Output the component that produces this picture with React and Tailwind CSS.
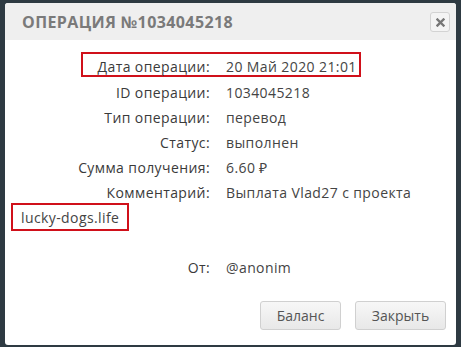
import React from "react";

const rows = [
  { label: "Дата операции:", value: "20 Май 2020 21:01", mark: true },
  { label: "ID операции:", value: "1034045218" },
  { label: "Тип операции:", value: "перевод" },
  { label: "Статус:", value: "выполнен" },
  { label: "Сумма получения:", value: "6.60 ₽" },
  { label: "Комментарий:", value: "Выплата Vlad27 с проекта" },
];

const App = () => {
  return (
    <div
      className="w-[461px] h-[347px] bg-[#2e3a42] pt-[3px] pl-[5px] overflow-hidden"
      style={{ fontFamily: '"Open Sans", "Liberation Sans", sans-serif' }}
    >
      <div className="w-[451px] h-[342px] bg-white rounded-[3px] overflow-hidden flex flex-col">
        {/* header */}
        <div className="h-[37px] bg-[#efefef] flex items-center justify-between pl-[17px] pr-[6px]">
          <span className="text-[16px] font-bold tracking-[0.4px] text-[#7a7a7a]">
            ОПЕРАЦИЯ №1034045218
          </span>
          <button className="w-[20px] h-[20px] mt-[1px] border border-[#d3d3d3] rounded-[3px] bg-[#f4f4f4] flex items-center justify-center">
            <svg width="9" height="9" viewBox="0 0 9 9">
              <path d="M1.5 1.5 L7.5 7.5 M7.5 1.5 L1.5 7.5" stroke="#777" strokeWidth="2.4" strokeLinecap="square" />
            </svg>
          </button>
        </div>

        {/* body */}
        <div className="pt-[12px] text-[14px] tracking-[0.4px] text-[#3a3a3a] whitespace-nowrap">
          {rows.map((r) =>
            r.mark ? (
              <div key={r.label} className="h-[25px] flex items-center">
                <div className="ml-[76px] h-[25px] pt-[3px] flex items-center border-2 border-[#d0101a] pr-[2px]">
                  <span className="w-[127px] text-right">{r.label}</span>
                  <span className="ml-[16px] text-[#444]">{r.value}</span>
                </div>
              </div>
            ) : (
              <div key={r.label} className="h-[25px] pt-[5px] flex items-center">
                <span className="w-[205px] text-right">{r.label}</span>
                <span className="ml-[16px] text-[#444]">{r.value}</span>
              </div>
            )
          )}
          <div className="h-[28px] mt-[1px] flex items-center">
            <span className="ml-[6px] h-[28px] px-[8px] flex items-center border-2 border-[#d0101a] text-[#444]">
              lucky-dogs.life
            </span>
          </div>
          <div className="h-[25px] mt-[24px] flex items-center">
            <span className="w-[205px] text-right">От:</span>
            <span className="ml-[16px] text-[#444]">@anonim</span>
          </div>
        </div>

        {/* footer */}
        <div className="mt-auto mb-[15px] flex justify-end gap-[14px] pr-[10px]">
          <button className="w-[81px] h-[29px] border border-[#d0d0d0] rounded-[3px] bg-gradient-to-b from-[#f7f7f7] to-[#e8e8e8] text-[14px] text-[#555]">
            Баланс
          </button>
          <button className="w-[91px] h-[29px] border border-[#d0d0d0] rounded-[3px] bg-gradient-to-b from-[#f7f7f7] to-[#e8e8e8] text-[14px] text-[#555]">
            Закрыть
          </button>
        </div>
      </div>
    </div>
  );
};

export default App;
